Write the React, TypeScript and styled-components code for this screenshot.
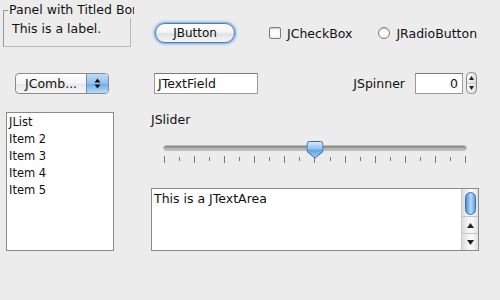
import styled, { createGlobalStyle } from "styled-components";

const Global = createGlobalStyle`
  html, body {
    margin: 0;
    padding: 0;
    background: #ececec;
  }
  body {
    font-family: "DejaVu Sans", "Liberation Sans", sans-serif;
    font-size: 12.5px;
    color: #111;
  }
`;

const Frame = styled.div`
  width: 500px;
  height: 300px;
  background: #ececec;
  display: flex;
  flex-direction: column;
  overflow: hidden;
`;

const Row = styled.div<{ $top: number; $height: number }>`
  display: flex;
  align-items: flex-start;
  margin-top: ${(p) => p.$top}px;
  height: ${(p) => p.$height}px;
`;

const Controls = styled.div`
  display: flex;
  align-items: center;
  margin-top: 23px;
  height: 20px;
`;

/* titled border panel */
const TitledPanel = styled.div`
  position: relative;
  margin-left: 2px;
  width: 132px;
  height: 47px;
  overflow: hidden;
`;

const PanelBox = styled.div`
  margin: 10px 0 0 1px;
  width: 128px;
  height: 37px;
  box-sizing: border-box;
  border: 1px solid #9a9a9a;
  border-bottom-color: #b8b8b8;
  border-right-color: #b8b8b8;
  display: flex;
  align-items: center;
  padding-left: 8px;
`;

const PanelTitle = styled.span`
  position: absolute;
  top: 2px;
  left: 6px;
  padding: 0 1px;
  background: #ececec;
  white-space: nowrap;
  line-height: 16px;
`;

const AquaButton = styled.button`
  margin-left: 21px;
  width: 80px;
  height: 20px;
  border-radius: 10px;
  border: 1px solid #4f7fb8;
  box-shadow: 0 0 0 1px #8fb8e6, 0 0 2px 2px rgba(120, 170, 230, 0.45);
  background: linear-gradient(#ffffff 0%, #f4f4f4 45%, #e2e2e2 55%, #f6f6f6 100%);
  font-family: "DejaVu Sans", "Liberation Sans", sans-serif;
  font-size: 12px;
  color: #111;
  padding: 0;
`;

const Choice = styled.label<{ $gap: number }>`
  display: flex;
  align-items: center;
  margin-left: ${(p) => p.$gap}px;
  white-space: nowrap;
`;

const Box = styled.span<{ $round?: boolean }>`
  width: 12px;
  height: 12px;
  box-sizing: border-box;
  border: 1px solid #7d7d7d;
  border-radius: ${(p) => (p.$round ? "50%" : "2px")};
  background: linear-gradient(#f2f2f2, #ffffff 60%, #f0f0f0);
  box-shadow: inset 0 1px 1px rgba(0, 0, 0, 0.15);
  margin-right: 6px;
`;

/* row 2 */
const Combo = styled.div`
  margin-left: 15px;
  width: 94px;
  height: 21px;
  box-sizing: border-box;
  border: 1px solid #8a8a8a;
  border-radius: 4px;
  display: flex;
  overflow: hidden;
  background: linear-gradient(#ffffff, #f3f3f3 50%, #e6e6e6 52%, #f7f7f7);
`;

const ComboText = styled.span`
  flex: 1;
  padding-left: 9px;
  line-height: 19px;
`;

const ComboArrow = styled.span`
  width: 21px;
  border-left: 1px solid #6f8fb5;
  background: linear-gradient(#bfdcf7, #8ec1ee 50%, #6aaae6 52%, #b7dcf8);
  display: flex;
  align-items: center;
  justify-content: center;
`;

const Field = styled.div<{ $gap: number; $width: number; $right?: boolean }>`
  margin-left: ${(p) => p.$gap}px;
  width: ${(p) => p.$width}px;
  height: 21px;
  box-sizing: border-box;
  border: 1px solid #9a9a9a;
  border-top-color: #7a7a7a;
  background: #fff;
  line-height: 19px;
  padding: 0 4px 0 3px;
  text-align: ${(p) => (p.$right ? "right" : "left")};
`;

const SpinLabel = styled.span`
  margin-left: auto;
  line-height: 21px;
`;

const SpinArrows = styled.svg`
  margin: -1px 23px 0 3px;
`;

/* row 3 */
const List = styled.ul`
  margin: 0 0 0 6px;
  padding: 1px 0 0 2px;
  list-style: none;
  width: 108px;
  height: 139px;
  box-sizing: border-box;
  border: 1px solid #8a8a8a;
  background: #fff;
  font-size: 11.5px;
`;

const ListItem = styled.li`
  line-height: 17px;
`;

const RightColumn = styled.div`
  margin-left: 37px;
  width: 328px;
  display: flex;
  flex-direction: column;
`;

const SliderLabel = styled.span`
  line-height: 16px;
`;

const Slider = styled.div`
  position: relative;
  margin: 13px 0 0 13px;
  width: 302px;
  height: 22px;
`;

const Track = styled.div`
  margin-top: 5px;
  height: 4px;
  border-radius: 2px;
  background: linear-gradient(#7d7d7d, #a9a9a9 50%, #c4c4c4);
  box-shadow: 0 0 0 0.5px #8a8a8a;
`;

const Thumb = styled.svg`
  position: absolute;
  top: 0;
  transform: translateX(-50%);
`;

const Ticks = styled.div`
  display: flex;
  justify-content: space-between;
  align-items: flex-start;
  margin-top: 6px;
`;

const Tick = styled.span<{ $major: boolean }>`
  width: 1px;
  height: ${(p) => (p.$major ? 7 : 4)}px;
  margin-top: ${(p) => (p.$major ? 0 : 1)}px;
  background: #7a7a7a;
`;

const TextArea = styled.div`
  margin-top: 25px;
  height: 63px;
  box-sizing: border-box;
  border: 1px solid #8a8a8a;
  background: #fff;
  display: flex;
`;

const AreaText = styled.div`
  flex: 1;
  padding: 2px 0 0 2px;
  line-height: 16px;
`;

const ScrollBar = styled.div`
  width: 16px;
  display: flex;
  flex-direction: column;
  border-left: 1px solid #c8c8c8;
  background: linear-gradient(90deg, #dcdcdc, #f4f4f4 40%, #fafafa 60%, #e2e2e2);
`;

const ScrollTrack = styled.div`
  flex: 1;
  display: flex;
  justify-content: center;
  padding-top: 3px;
`;

const ScrollThumb = styled.div`
  width: 11px;
  height: 23px;
  border-radius: 6px;
  border: 1px solid #3f6fae;
  box-sizing: border-box;
  background: linear-gradient(90deg, #4d8fdc, #9ccaf3 40%, #b7dbfa 55%, #5d9fe4);
`;

const ScrollButton = styled.div`
  height: 16px;
  display: flex;
  align-items: center;
  justify-content: center;
  border-top: 1px solid #c4c4c4;
`;

const Triangle = ({ up }: { up: boolean }) => (
  <svg width="7" height="5" viewBox="0 0 7 5">
    <path d={up ? "M3.5 0 L7 5 L0 5 Z" : "M0 0 L7 0 L3.5 5 Z"} fill="#222" />
  </svg>
);

const items = ["JList", "Item 2", "Item 3", "Item 4", "Item 5"];
const ticks = Array.from({ length: 21 }, (_, i) => i);

export default function App() {
  return (
    <Frame>
      <Global />
      <Row $top={0} $height={47}>
        <TitledPanel>
          <PanelBox>This is a label.</PanelBox>
          <PanelTitle>Panel with Titled Border</PanelTitle>
        </TitledPanel>
        <Controls>
          <AquaButton>JButton</AquaButton>
          <Choice $gap={34}>
            <Box />
            JCheckBox
          </Choice>
          <Choice $gap={26}>
            <Box $round />
            JRadioButton
          </Choice>
        </Controls>
      </Row>

      <Row $top={26} $height={21}>
        <Combo>
          <ComboText>JComb...</ComboText>
          <ComboArrow>
            <svg width="7" height="11" viewBox="0 0 7 11">
              <path d="M3.5 0.5 L6.5 4.5 L0.5 4.5 Z" fill="#111" />
              <path d="M0.5 6.5 L6.5 6.5 L3.5 10.5 Z" fill="#111" />
            </svg>
          </ComboArrow>
        </Combo>
        <Field $gap={45} $width={104}>
          JTextField
        </Field>
        <SpinLabel>JSpinner</SpinLabel>
        <Field $gap={10} $width={48} $right>
          0
        </Field>
        <SpinArrows width="11" height="22" viewBox="0 0 11 22">
          <defs>
            <linearGradient id="spin" x1="0" x2="1" y1="0" y2="0">
              <stop offset="0" stopColor="#f7f7f7" />
              <stop offset="1" stopColor="#dedede" />
            </linearGradient>
          </defs>
          <rect x="0.5" y="0.5" width="10" height="21" rx="4" fill="url(#spin)" stroke="#8a8a8a" />
          <line x1="1" y1="11" x2="10" y2="11" stroke="#c8c8c8" />
          <path d="M5.5 4 L8 8 L3 8 Z" fill="#222" />
          <path d="M3 14 L8 14 L5.5 18 Z" fill="#222" />
        </SpinArrows>
      </Row>

      <Row $top={18} $height={139}>
        <List>
          {items.map((it) => (
            <ListItem key={it}>{it}</ListItem>
          ))}
        </List>
        <RightColumn>
          <SliderLabel>JSlider</SliderLabel>
          <Slider>
            <Track />
            <Thumb width="17" height="18" viewBox="0 0 17 18" style={{ left: "50%" }}>
              <defs>
                <linearGradient id="thumb" x1="0" x2="0" y1="0" y2="1">
                  <stop offset="0" stopColor="#d9ecfc" />
                  <stop offset="0.45" stopColor="#8cc2f1" />
                  <stop offset="0.55" stopColor="#5fa6ea" />
                  <stop offset="1" stopColor="#9fd0f8" />
                </linearGradient>
              </defs>
              <path
                d="M3 0.5 H14 Q16.5 0.5 16.5 3 V10.5 L8.5 17 L0.5 10.5 V3 Q0.5 0.5 3 0.5 Z"
                fill="url(#thumb)"
                stroke="#3f6aa3"
              />
            </Thumb>
            <Ticks>
              {ticks.map((t) => (
                <Tick key={t} $major={t % 2 === 0} />
              ))}
            </Ticks>
          </Slider>
          <TextArea>
            <AreaText>This is a JTextArea</AreaText>
            <ScrollBar>
              <ScrollTrack>
                <ScrollThumb />
              </ScrollTrack>
              <ScrollButton>
                <Triangle up />
              </ScrollButton>
              <ScrollButton>
                <Triangle up={false} />
              </ScrollButton>
            </ScrollBar>
          </TextArea>
        </RightColumn>
      </Row>
    </Frame>
  );
}
